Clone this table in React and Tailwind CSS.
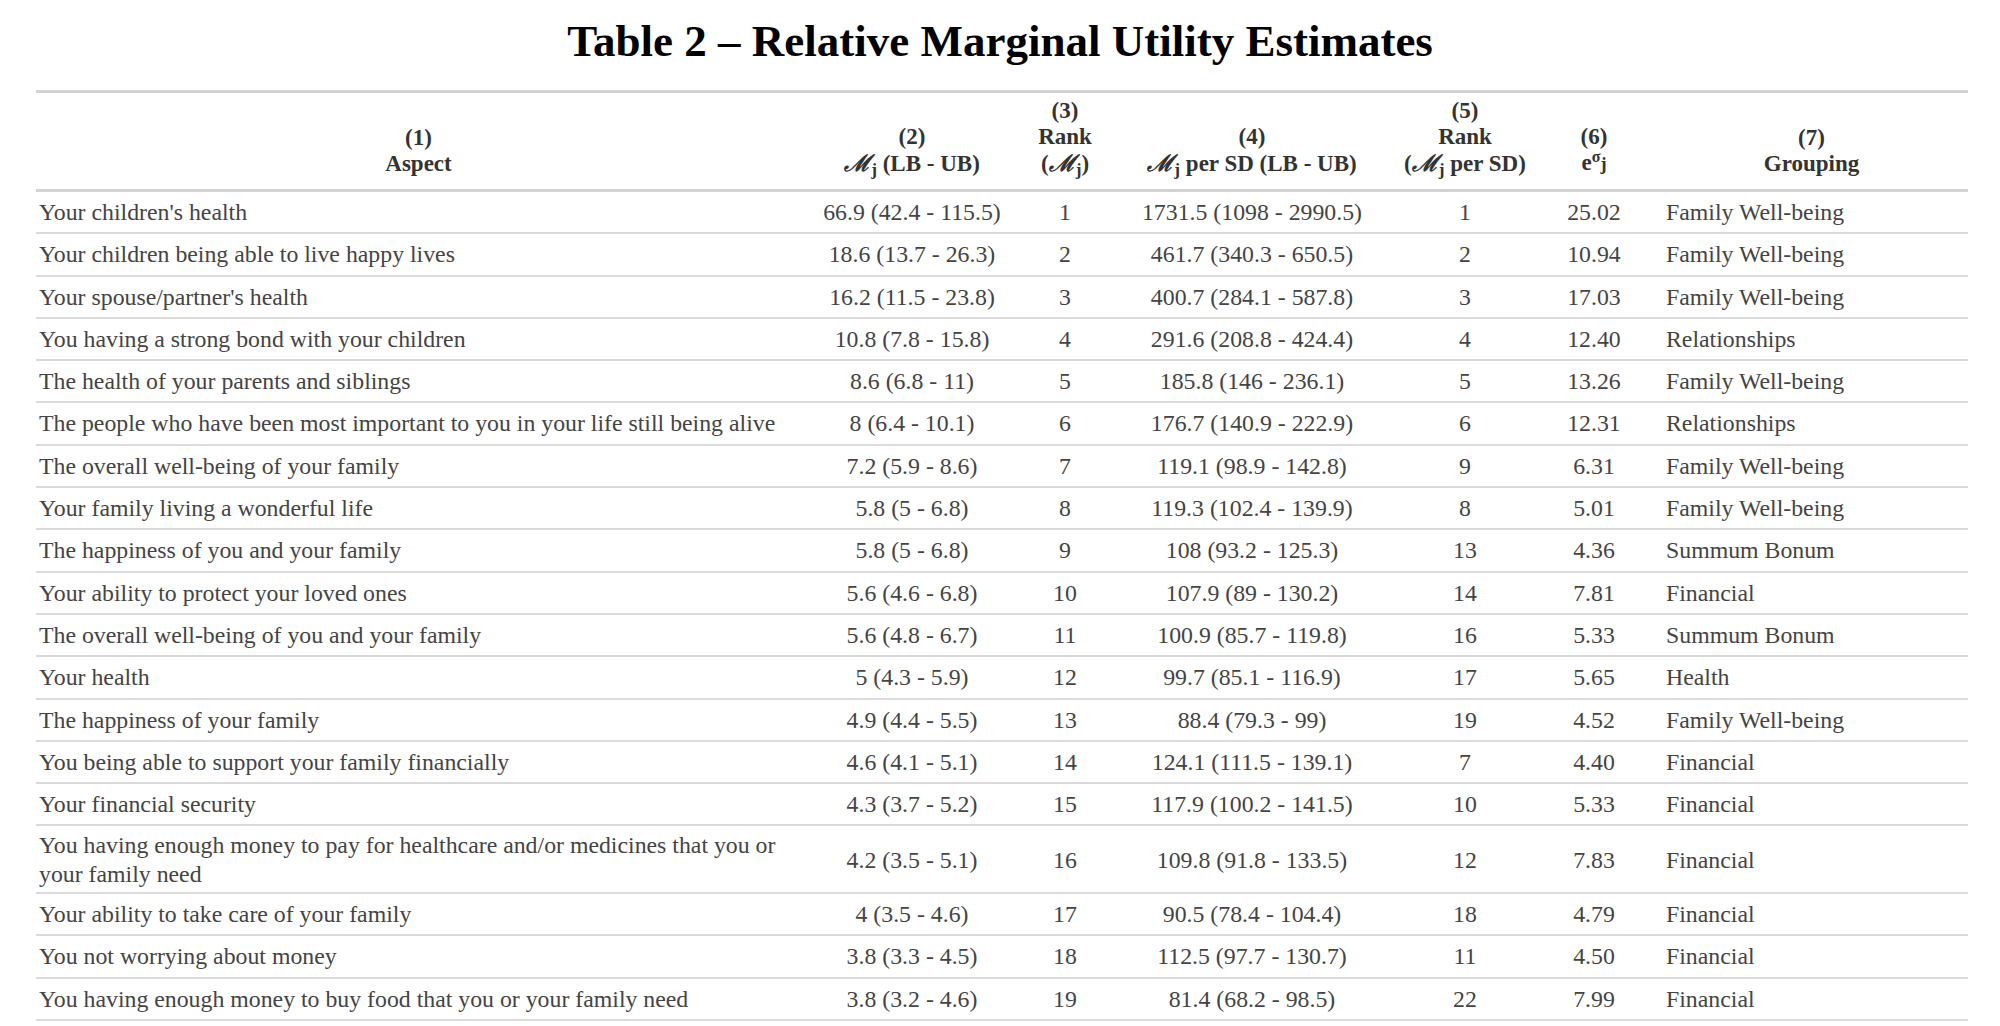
import React from 'react';

const rows = [
  ["Your children's health", '66.9 (42.4 - 115.5)', '1', '1731.5 (1098 - 2990.5)', '1', '25.02', 'Family Well-being'],
  ['Your children being able to live happy lives', '18.6 (13.7 - 26.3)', '2', '461.7 (340.3 - 650.5)', '2', '10.94', 'Family Well-being'],
  ["Your spouse/partner's health", '16.2 (11.5 - 23.8)', '3', '400.7 (284.1 - 587.8)', '3', '17.03', 'Family Well-being'],
  ['You having a strong bond with your children', '10.8 (7.8 - 15.8)', '4', '291.6 (208.8 - 424.4)', '4', '12.40', 'Relationships'],
  ['The health of your parents and siblings', '8.6 (6.8 - 11)', '5', '185.8 (146 - 236.1)', '5', '13.26', 'Family Well-being'],
  ['The people who have been most important to you in your life still being alive', '8 (6.4 - 10.1)', '6', '176.7 (140.9 - 222.9)', '6', '12.31', 'Relationships'],
  ['The overall well-being of your family', '7.2 (5.9 - 8.6)', '7', '119.1 (98.9 - 142.8)', '9', '6.31', 'Family Well-being'],
  ['Your family living a wonderful life', '5.8 (5 - 6.8)', '8', '119.3 (102.4 - 139.9)', '8', '5.01', 'Family Well-being'],
  ['The happiness of you and your family', '5.8 (5 - 6.8)', '9', '108 (93.2 - 125.3)', '13', '4.36', 'Summum Bonum'],
  ['Your ability to protect your loved ones', '5.6 (4.6 - 6.8)', '10', '107.9 (89 - 130.2)', '14', '7.81', 'Financial'],
  ['The overall well-being of you and your family', '5.6 (4.8 - 6.7)', '11', '100.9 (85.7 - 119.8)', '16', '5.33', 'Summum Bonum'],
  ['Your health', '5 (4.3 - 5.9)', '12', '99.7 (85.1 - 116.9)', '17', '5.65', 'Health'],
  ['The happiness of your family', '4.9 (4.4 - 5.5)', '13', '88.4 (79.3 - 99)', '19', '4.52', 'Family Well-being'],
  ['You being able to support your family financially', '4.6 (4.1 - 5.1)', '14', '124.1 (111.5 - 139.1)', '7', '4.40', 'Financial'],
  ['Your financial security', '4.3 (3.7 - 5.2)', '15', '117.9 (100.2 - 141.5)', '10', '5.33', 'Financial'],
  ['You having enough money to pay for healthcare and/or medicines that you or your family need', '4.2 (3.5 - 5.1)', '16', '109.8 (91.8 - 133.5)', '12', '7.83', 'Financial'],
  ['Your ability to take care of your family', '4 (3.5 - 4.6)', '17', '90.5 (78.4 - 104.4)', '18', '4.79', 'Financial'],
  ['You not worrying about money', '3.8 (3.3 - 4.5)', '18', '112.5 (97.7 - 130.7)', '11', '4.50', 'Financial'],
  ['You having enough money to buy food that you or your family need', '3.8 (3.2 - 4.6)', '19', '81.4 (68.2 - 98.5)', '22', '7.99', 'Financial'],
];

// script M with subscript j, as in the header cells
const M = () => (
  <span>
    <span className="font-['DejaVu_Serif',serif] italic">ℳ</span>
    <sub className="text-[0.75em]">j</sub>
  </span>
);

const th = 'pt-[5px] pb-[12px] text-center font-bold';

const App = () => {
  return (
    <div className="min-h-screen bg-white font-['Liberation_Serif',serif] text-[#444]">
      <h1 className="pt-[15px] text-center text-[45px] font-bold leading-[52px] text-black">
        Table 2 – Relative Marginal Utility Estimates
      </h1>
      <div className="mt-[23px] pl-[36px]">
        <table className="w-[1932px] table-fixed border-collapse">
          <colgroup>
            <col className="w-[765px]" />
            <col className="w-[222px]" />
            <col className="w-[84px]" />
            <col className="w-[290px]" />
            <col className="w-[136px]" />
            <col className="w-[122px]" />
            <col className="w-[313px]" />
          </colgroup>
          <thead>
            <tr className="border-t-[3px] border-b-[3px] border-[#d3d3d3] align-bottom text-[23px] font-bold leading-[26px] text-[#333]">
              <th className={th}>(1)<br />Aspect</th>
              <th className={th}>(2)<br /><M /> (LB - UB)</th>
              <th className={th}>(3)<br />Rank<br />(<M />)</th>
              <th className={th}>(4)<br /><M /> per SD (LB - UB)</th>
              <th className={th}>(5)<br />Rank<br />(<M /> per SD)</th>
              <th className={th}>(6)<br />e<sup className="text-[0.7em]">σ</sup><span className="text-[0.8em]">j</span></th>
              <th className={th}>(7)<br />Grouping</th>
            </tr>
          </thead>
          <tbody>
            {rows.map((r, i) => {
              // the one wrapped row sits a little tighter
              const pad = r[0].length > 80 ? 'pt-[5px] pb-[4px]' : 'pt-[6px] pb-[6px]';
              return (
                <tr key={i} className="border-b-2 border-[#dadada] text-[23.8px] leading-[28.3px]">
                  <td className={`${pad} pl-[3px] pr-[8px] text-left`}>{r[0]}</td>
                  <td className={`${pad} text-center`}>{r[1]}</td>
                  <td className={`${pad} text-center`}>{r[2]}</td>
                  <td className={`${pad} text-center`}>{r[3]}</td>
                  <td className={`${pad} text-center`}>{r[4]}</td>
                  <td className={`${pad} text-center`}>{r[5]}</td>
                  <td className={`${pad} pl-[11px] text-left`}>{r[6]}</td>
                </tr>
              );
            })}
          </tbody>
        </table>
      </div>
    </div>
  );
};

export default App;
